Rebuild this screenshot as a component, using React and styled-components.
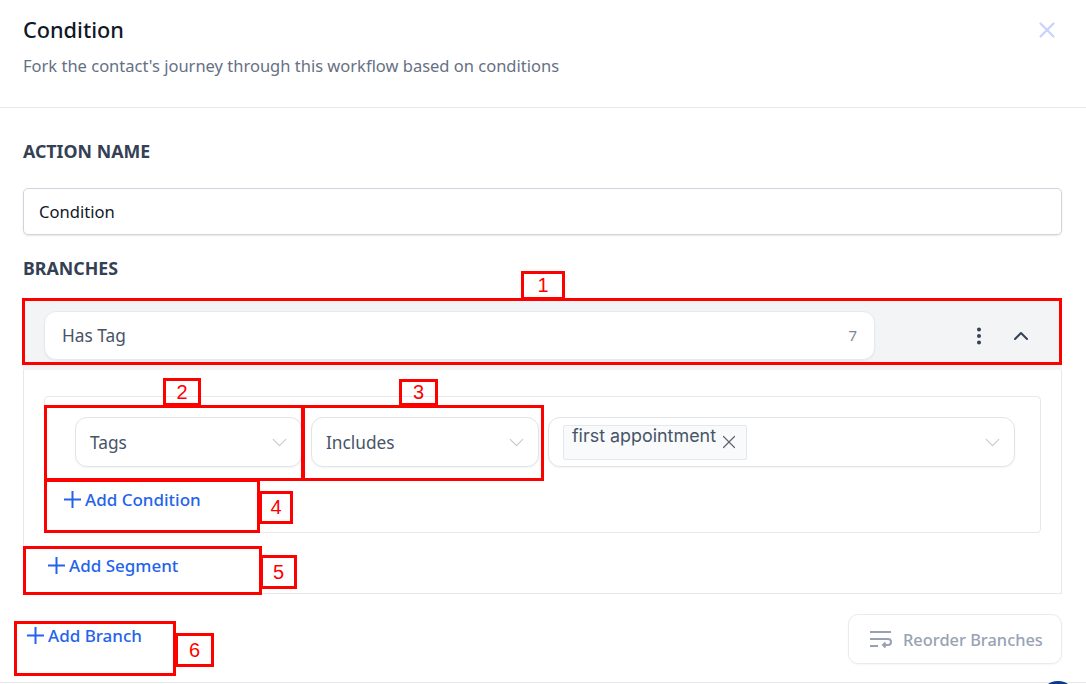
import React from "react";
import styled, { createGlobalStyle } from "styled-components";
import { ChevronDown, ChevronUp, EllipsisVertical, X } from "lucide-react";

const GlobalStyle = createGlobalStyle`
  html, body {
    margin: 0;
    padding: 0;
    background: #ffffff;
    overflow: hidden;
  }
  * {
    box-sizing: border-box;
  }
`;

const annotations = [
  { n: 1, box: [22, 298, 1040, 67], label: [521, 271, 44, 29] },
  { n: 2, box: [44, 405, 260, 76], label: [163, 378, 38, 28] },
  { n: 3, box: [302, 405, 242, 76], label: [399, 379, 39, 27] },
  { n: 4, box: [44, 479, 216, 54], label: [259, 491, 34, 33] },
  { n: 5, box: [23, 546, 239, 49], label: [260, 555, 37, 34] },
  { n: 6, box: [14, 621, 162, 55], label: [175, 633, 39, 34] },
];

function PlusIcon() {
  return (
    <svg width="17" height="17" viewBox="0 0 17 17" fill="none" stroke="currentColor" strokeWidth="2">
      <path d="M8.5 0v17M0 8.5h17" />
    </svg>
  );
}

function ReorderIcon() {
  return (
    <svg width="22" height="18" viewBox="0 0 22 18" fill="none" stroke="#98a2b3" strokeWidth="2">
      <path d="M0 2h21" />
      <path d="M0 9h18a3 3 0 0 1 0 6h-5" />
      <path d="M15.5 12.5 13 15l2.5 2.5" />
      <path d="M0 16h8" />
    </svg>
  );
}

function AddLink({ left, top, children }) {
  return (
    <AddButton $left={left} $top={top}>
      <PlusIcon />
      {children}
    </AddButton>
  );
}

export default function App() {
  return (
    <Page>
      <GlobalStyle />
      <Header>
        <div>
          <Title>Condition</Title>
          <Subtitle>Fork the contact's journey through this workflow based on conditions</Subtitle>
        </div>
        <CloseButton>
          <X size={26} strokeWidth={2} />
        </CloseButton>
      </Header>

      <Form>
        <Label>ACTION NAME</Label>
        <NameInput>Condition</NameInput>
        <BranchesLabel>BRANCHES</BranchesLabel>

        <BranchHead>
          <BranchName>
            <span>Has Tag</span>
            <Count>7</Count>
          </BranchName>
          <HeadActions>
            <EllipsisVertical size={22} strokeWidth={2.4} />
            <ChevronUp size={24} strokeWidth={2} />
          </HeadActions>
        </BranchHead>

        <BranchBody>
          <ConditionCard>
            <SelectRow>
              <Select $width={227}>
                Tags
                <ChevronDown size={25} strokeWidth={1.1} />
              </Select>
              <Select $width={228}>
                Includes
                <ChevronDown size={25} strokeWidth={1.1} />
              </Select>
              <Select $width={467}>
                <Chip>
                  <ChipText>first appointment</ChipText>
                  <ChipClose>
                    <X size={22} strokeWidth={1.3} />
                  </ChipClose>
                </Chip>
                <ChevronDown size={25} strokeWidth={1.1} />
              </Select>
            </SelectRow>
            <AddLink left={19} top={21}>Add Condition</AddLink>
          </ConditionCard>
          <AddLink left={24} top={21}>Add Segment</AddLink>
        </BranchBody>

        <Footer>
          <AddLink left={4} top={10}>Add Branch</AddLink>
          <ReorderButton>
            <ReorderIcon />
            Reorder Branches
          </ReorderButton>
        </Footer>
      </Form>

      <BottomLine />
      <ChatBubble />

      {annotations.map((a) => (
        <React.Fragment key={a.n}>
          <RedBox $r={a.box} />
          <RedLabel $r={a.label}>{a.n}</RedLabel>
        </React.Fragment>
      ))}
    </Page>
  );
}

const Page = styled.div`
  position: relative;
  width: 1086px;
  height: 684px;
  overflow: hidden;
  background: #ffffff;
  font-family: "Noto Sans", "Open Sans", sans-serif;
  color: #101828;
`;

const Header = styled.div`
  display: flex;
  justify-content: space-between;
  height: 108px;
  padding: 15px 26px 0 23px;
  border-bottom: 1px solid #e6e8ec;
`;

const Title = styled.div`
  font-size: 21.7px;
  line-height: 30px;
  font-weight: 500;
  color: #101828;
`;

const Subtitle = styled.div`
  margin-top: 6px;
  font-size: 16.5px;
  line-height: 30px;
  color: #667085;
`;

const CloseButton = styled.div`
  margin-top: 2px;
  color: #c7d2fe;
`;

const Form = styled.div`
  padding: 31px 24px 0 23px;
`;

const Label = styled.div`
  font-size: 17.8px;
  line-height: 24px;
  font-weight: 700;
  color: #344054;
`;

const BranchesLabel = styled(Label)`
  margin-top: 21px;
`;

const NameInput = styled.div`
  display: flex;
  align-items: center;
  height: 47px;
  margin-top: 25px;
  padding-left: 15px;
  border: 1px solid #d0d5dd;
  border-radius: 5px;
  box-shadow: 0 1px 2px rgba(16, 24, 40, 0.1);
  font-size: 16.6px;
  color: #101828;
`;

const BranchHead = styled.div`
  display: flex;
  align-items: center;
  justify-content: space-between;
  height: 71px;
  margin-top: 19px;
  padding: 2px 29px 0 21px;
  background: #f3f4f6;
`;

const BranchName = styled.div`
  display: flex;
  align-items: center;
  justify-content: space-between;
  width: 831px;
  height: 49px;
  padding: 0 17px;
  background: #ffffff;
  border: 1px solid #e7e9ee;
  border-radius: 12px;
  box-shadow: 0 1px 2px rgba(16, 24, 40, 0.05);
  font-size: 17.3px;
  color: #475467;
`;

const Count = styled.span`
  font-size: 15px;
  line-height: 20px;
  margin-top: -1px;
  color: #7d8694;
`;

const HeadActions = styled.div`
  display: flex;
  align-items: center;
  gap: 19px;
  color: #344054;
`;

const BranchBody = styled.div`
  height: 224px;
  padding-top: 26px;
  border: 1px solid #e6e8ec;
  border-top: none;
`;

const ConditionCard = styled.div`
  height: 137px;
  margin: 0 20px;
  padding-top: 20px;
  border: 1px solid #e6e8ec;
  border-radius: 4px;
`;

const SelectRow = styled.div`
  display: flex;
  gap: 9px;
  padding-left: 30px;
`;

const Select = styled.div`
  display: flex;
  align-items: center;
  justify-content: space-between;
  width: ${(p) => p.$width}px;
  height: 50px;
  padding: 0 9px 0 14px;
  background: #ffffff;
  border: 1px solid #e1e4ea;
  border-radius: 12px;
  box-shadow: 0 1px 2px rgba(16, 24, 40, 0.05);
  font-size: 17.3px;
  color: #475467;

  > svg {
    color: #c4c8d0;
  }
`;

const Chip = styled.div`
  display: flex;
  width: 184px;
  height: 35px;
  padding-left: 8px;
  background: #f9fafb;
  border: 1px solid #e4e7ec;
  border-radius: 2px;
`;

const ChipText = styled.span`
  font-family: Inter, sans-serif;
  font-size: 17.9px;
  line-height: 20px;
  color: #475467;
  white-space: nowrap;
`;

const ChipClose = styled.span`
  margin: 5px 0 0 2px;

  svg {
    display: block;
    color: #5f6673;
  }
`;

const AddButton = styled.div`
  display: flex;
  align-items: center;
  gap: 4px;
  margin: ${(p) => p.$top}px 0 0 ${(p) => p.$left}px;
  font-size: 17px;
  line-height: 24px;
  font-weight: 500;
  color: #2563eb;
  white-space: nowrap;

  svg {
    display: block;
    margin-top: -2px;
  }
`;

const Footer = styled.div`
  display: flex;
  align-items: flex-start;
  justify-content: space-between;
  margin-top: 20px;
`;

const ReorderButton = styled.div`
  display: flex;
  align-items: center;
  gap: 11px;
  height: 50px;
  width: 214px;
  padding-left: 21px;
  border: 1px solid #e8eaee;
  border-radius: 10px;
  box-shadow: 0 1px 2px rgba(16, 24, 40, 0.04);
  font-size: 16.4px;
  font-weight: 500;
  color: #98a2b3;
`;

const BottomLine = styled.div`
  position: absolute;
  left: 0;
  right: 0;
  top: 682px;
  height: 1px;
  background: #e6e8ec;
`;

const ChatBubble = styled.div`
  position: absolute;
  left: 1040px;
  top: 681px;
  width: 36px;
  height: 36px;
  border-radius: 50%;
  background: #0b3b8c;
`;

const place = (p) => `
  left: ${p.$r[0]}px;
  top: ${p.$r[1]}px;
  width: ${p.$r[2]}px;
  height: ${p.$r[3]}px;
`;

const RedBox = styled.div`
  position: absolute;
  ${place}
  border: 3px solid #ff0000;
`;

const RedLabel = styled.div`
  position: absolute;
  ${place}
  display: flex;
  align-items: center;
  justify-content: center;
  border: 3px solid #ff0000;
  font-family: "Liberation Sans", Arial, sans-serif;
  font-size: 20px;
  color: #ff0000;
`;
